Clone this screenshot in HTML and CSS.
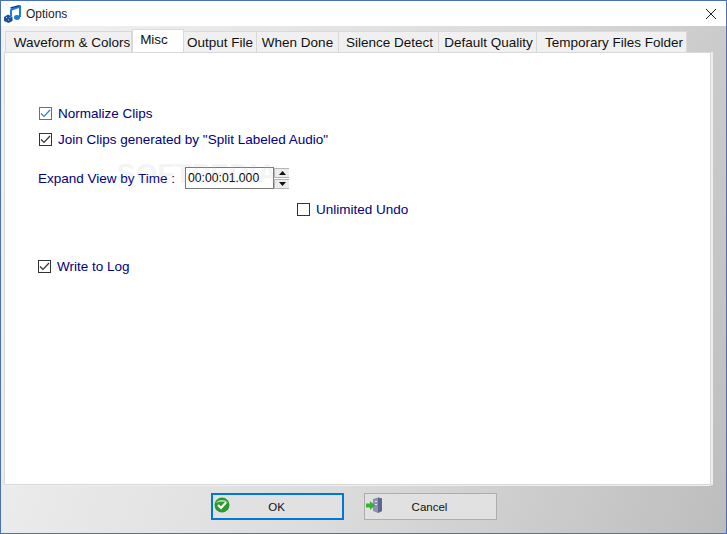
FILE: index.html
```html
<!DOCTYPE html>
<html lang="en">
<head>
<meta charset="utf-8">
<title>Options</title>
<link rel="stylesheet" href="styles.css">
</head>
<body>
<div class="window">
  <header class="titlebar">
    <svg class="app-icon" width="17" height="18" viewBox="0 0 17 18">
      <path d="M6.5 5 L16 1.5 V12" fill="none" stroke="#1a7de0" stroke-width="2"/>
      <path d="M7 5 V11" fill="none" stroke="#1a7de0" stroke-width="2"/>
      <path d="M6.5 3 L15.5 .6" fill="none" stroke="#0a3f96" stroke-width="1.4"/>
      <ellipse cx="13" cy="12.5" rx="3" ry="2.4" fill="#1a7de0"/>
      <path d="M0 12 L4 9.5 L8.5 12 L8.5 16 L4.5 18 L0 16 Z" fill="#1d4f95"/>
      <path d="M2 12.5 h1 M5.5 12.5 h1 M4 15 h1" stroke="#cfe0f5" stroke-width="1"/>
    </svg>
    <span class="title-text">Options</span>
    <svg class="close-icon" width="10" height="10" viewBox="0 0 10 10">
      <path d="M0 0 L10 10 M10 0 L0 10" stroke="#222" stroke-width="1" fill="none"/>
    </svg>
  </header>
  <main class="client">
    <nav class="tabs">
      <span class="tab tab-wave">Waveform &amp; Colors</span>
      <span class="tab tab-active">Misc</span>
      <span class="tab tab-output">Output File</span>
      <span class="tab tab-done">When Done</span>
      <span class="tab tab-silence">Silence Detect</span>
      <span class="tab tab-quality">Default Quality</span>
      <span class="tab tab-temp">Temporary Files Folder</span>
    </nav>
    <section class="panel">
      <label class="check-row row-normalize"><span class="box box-hover"><svg width="11" height="9" viewBox="0 0 11 9"><path d="M1 4.5 L4 7.5 L10 1" fill="none" stroke="#2a7fd0" stroke-width="1.2"/></svg></span>Normalize Clips</label>
      <label class="check-row row-join"><span class="box"><svg width="11" height="9" viewBox="0 0 11 9"><path d="M1 4.5 L4 7.5 L10 1" fill="none" stroke="#333" stroke-width="1.2"/></svg></span>Join Clips generated by "Split Labeled Audio"</label>
      <div class="time-row">
        <span class="time-label">Expand View by Time :</span>
        <span class="time-input">00:00:01.000</span>
        <span class="spinner">
          <span class="spin"><svg width="7" height="4" viewBox="0 0 7 4"><path d="M3.5 0 L7 4 H0 Z" fill="#111"/></svg></span>
          <span class="spin"><svg width="7" height="4" viewBox="0 0 7 4"><path d="M0 0 H7 L3.5 4 Z" fill="#111"/></svg></span>
        </span>
      </div>
      <label class="check-row row-undo"><span class="box"></span>Unlimited Undo</label>
      <label class="check-row row-log"><span class="box"><svg width="11" height="9" viewBox="0 0 11 9"><path d="M1 4.5 L4 7.5 L10 1" fill="none" stroke="#333" stroke-width="1.2"/></svg></span>Write to Log</label>
      <span class="watermark">SOFTPEDIA</span>
    </section>
    <footer class="actions">
      <button class="btn btn-default" type="button">
        <svg class="btn-icon" width="16" height="16" viewBox="0 0 16 16">
          <circle cx="8" cy="8" r="7.5" fill="#2c9a2c"/>
          <path d="M2 6 A6.5 5 0 0 1 14 6 A10 6 0 0 0 2 6" fill="#a5e39a"/>
          <path d="M4 8 L7 11 L12 5.5" fill="none" stroke="#fff" stroke-width="2.2"/>
        </svg>
        <span class="btn-label">OK</span>
      </button>
      <button class="btn" type="button">
        <svg class="btn-icon icon-door" width="17" height="16" viewBox="0 0 17 16">
          <path d="M7 2 L12 .5 L16 1.5 V14 L12 16 L7 14 Z" fill="#8a93b5"/>
          <path d="M12 .5 L16 1.5 V14 L12 16 Z" fill="#5f688c"/>
          <path d="M9 4 h2 v1 h-2 Z M9 7 h2 v1 h-2 Z" fill="#e4e7f2"/>
          <path d="M0 6.5 H4 V4 L9 8.5 L4 13 V10.5 H0 Z" fill="#35b52c"/>
        </svg>
        <span class="btn-label">Cancel</span>
      </button>
    </footer>
  </main>
</div>
</body>
</html>
```
FILE: styles.css
```css
html, body {
  margin: 0;
  padding: 0;
}
body {
  width: 727px;
  height: 534px;
  overflow: hidden;
  font-family: "Liberation Sans", Arial, sans-serif;
  font-size: 13.5px;
  color: #000;
}
.window {
  box-sizing: border-box;
  width: 727px;
  height: 534px;
  border: 1px solid #4a70b8;
  display: flex;
  flex-direction: column;
  background: #fff;
}
.titlebar {
  height: 25px;
  flex: none;
  display: flex;
  align-items: center;
  background: #fff;
  padding: 0 10px 0 3px;
}
.app-icon {
  margin-right: 5px;
}
.title-text {
  font-size: 12px;
  color: #222;
  flex: 1;
}
.client {
  flex: 1;
  display: flex;
  flex-direction: column;
  padding: 3px 15px 0 3px;
  background: linear-gradient(110deg, #f3f3f3 0%, #dcdcdc 55%, #bdbdbd 100%);
  min-height: 0;
}
.tabs {
  display: flex;
  align-items: flex-end;
  height: 23px;
  flex: none;
  padding-left: 1px;
  position: relative;
  z-index: 1;
}
.tab {
  box-sizing: border-box;
  height: 21px;
  display: flex;
  align-items: center;
  justify-content: center;
  font-size: 13.5px;
  white-space: nowrap;
  color: #111;
  background: #f0f0f0;
  border: 1px solid #d9d9d9;
  border-bottom: 0;
  border-left: 0;
}
.tab-wave { width: 127px; border-left: 1px solid #d9d9d9; padding-left: 7px; }
.tab-active {
  width: 52px;
  height: 23px;
  background: #fff;
  border: 1px solid #d9d9d9;
  border-bottom: 0;
  padding: 0 8px 4px 0;
}
.tab-output { width: 73px; }
.tab-done { width: 82px; }
.tab-silence { width: 100px; padding-left: 2px; }
.tab-quality { width: 98px; padding-left: 2px; }
.tab-temp { width: 150px; padding-left: 5px; }
.panel {
  position: relative;
  flex: 1;
  background: #fff;
  border: 1px solid #d9d9d9;
  box-shadow: 2px 0 0 #eeeeee, 0 1px 0 #eeeeee;
  color: #000080;
  min-height: 0;
  padding-top: 52px;
}
.watermark {
  position: absolute;
  left: 112px;
  top: 105px;
  font-size: 28px;
  line-height: 32px;
  letter-spacing: 0;
  color: rgba(190, 190, 190, 0.18);
  font-weight: bold;
  pointer-events: none;
}
.check-row {
  position: relative;
  display: flex;
  align-items: center;
  height: 16px;
}
.box {
  box-sizing: border-box;
  width: 13px;
  height: 13px;
  border: 1px solid #333;
  background: #fff;
  margin-right: 6px;
  display: flex;
  align-items: center;
  justify-content: center;
}
.box-hover {
  border-color: #2a7fd0;
}
.row-normalize { margin-left: 34px; }
.row-join { margin-left: 34px; margin-top: 10px; }
.time-row {
  display: flex;
  align-items: center;
  height: 22px;
  margin-top: 20px;
  margin-left: 33px;
  position: relative;
}
.time-label {
  width: 147px;
}
.time-input {
  box-sizing: border-box;
  width: 89px;
  height: 22px;
  border: 1px solid #7a7a7a;
  background: #fff;
  color: #000;
  display: flex;
  align-items: center;
  padding-left: 2px;
  font-size: 12.2px;
}
.spinner {
  display: flex;
  flex-direction: column;
  gap: 1px;
  width: 15px;
  height: 21px;
}
.spin {
  flex: 1;
  background: #ececec;
  border: 1px solid #b5b5b5;
  border-right-width: 0;
  display: flex;
  align-items: center;
  justify-content: center;
}
.row-undo { margin-left: 292px; margin-top: 12px; }
.row-log { margin-left: 33px; margin-top: 41px; }
.actions {
  box-sizing: border-box;
  height: 48px;
  flex: none;
  display: flex;
  align-items: flex-start;
  gap: 20px;
  padding: 8px 0 0 207px;
}
.btn {
  position: relative;
  box-sizing: border-box;
  width: 133px;
  height: 27px;
  border: 1px solid #adadad;
  background: #e1e1e1;
  font-family: inherit;
  font-size: 11.5px;
  color: #111;
  padding: 0 2px 0 0;
  display: flex;
  align-items: center;
  justify-content: center;
}
.btn-default {
  border: 2px solid #0078d7;
}
.btn-icon {
  position: absolute;
  left: 1px;
  top: 2px;
}
.icon-door {
  top: 3px;
}
```
